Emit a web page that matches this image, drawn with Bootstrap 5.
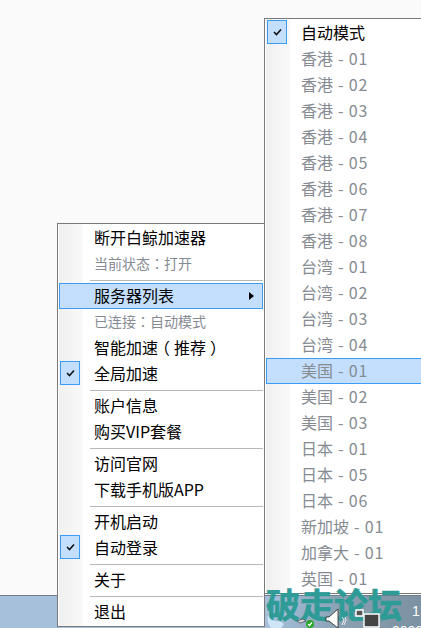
<!DOCTYPE html>
<html lang="en">
<head>
    <meta charset="UTF-8">
    <meta name="viewport" content="width=device-width, initial-scale=1.0">
    <title>白鲸加速器</title>
    <link href="https://cdn.jsdelivr.net/npm/bootstrap@5.3.0/dist/css/bootstrap.min.css" rel="stylesheet">
    <style>
        html, body { height: 100%; overflow: hidden; }
        body { font-family: "Noto Sans CJK SC", "Liberation Sans", sans-serif; background: #fafafa; color: #000; }
        .desk { position: relative; height: 628px; width: 421px; overflow: hidden; }
        .desk-top { height: 595px; }
        .taskbar { height: 33px; border-top: 1px solid #6f7f8f; background: linear-gradient(to right, #a6c0dc 0, #a6c0dc 270px, #8aa1b3 340px, #7c92a2 421px); position: relative; }
        .popup { position: absolute; background-color: #fff; border: 1px solid #7a7a7a; padding: 1px; background-image: linear-gradient(to right, #f0f0f0, #f9f9f9); background-size: 24px 100%; background-repeat: no-repeat; background-position: 1px 0; }
        .popup-main { left: 57px; top: 223px; width: 208px; }
        .popup-sub { left: 264px; top: 18px; width: 200px; }
        .row-item { height: 26px; font-size: 16px; line-height: 24px; padding-left: 35px; white-space: nowrap; position: relative; word-spacing: 1.5px; }
        .row-item.dim { color: #868b93; }
        .row-item.tiny { font-size: 14px; }
        .row-item.hot { background: #c3dffd; outline: 1px solid #3c9bf6; outline-offset: -1px; }
        .num { letter-spacing: 1px; }
        .punct { font-family: "Noto Sans CJK TC", sans-serif; }
        .paren-l { margin-left: -4px; margin-right: 4px; }
        .paren-r { margin-left: 4px; margin-right: -4px; }
        .row-sep { height: 6px; padding: 3px 0 0 31px; }
        .row-sep hr { margin: 0; border: 0; height: 1px; background: #b9b9b9; opacity: 1; }
        .tick { position: absolute; left: 1px; top: 0; width: 20px; height: 24px; background: #c3dffd; border: 1px solid #3c9bf6; }
        .tick svg { display: block; margin: 7px 0 0 5px; }
        .sub-arrow { position: absolute; right: 9px; top: 9px; width: 0; height: 0; border-left: 5px solid #000; border-top: 4px solid transparent; border-bottom: 4px solid transparent; }
        .stamp { position: absolute; left: 266px; top: 583px; font-size: 34px; line-height: 42px; font-weight: 700; color: #2f9b96; -webkit-text-stroke: .7px #2f9b96; white-space: nowrap; }
        .tray { position: absolute; left: 267px; top: 608px; }
        .clock { position: absolute; left: 392px; top: 5px; width: 40px; color: #fff; font-size: 14px; line-height: 20px; font-family: "Liberation Sans", sans-serif; }
        .clock div:first-child { padding-left: 20px; }
    </style>
</head>
<body>
    <div class="desk">
        <div class="desk-top"></div>
        <div class="taskbar">
            <div class="clock"><div>1</div><div>2022</div></div>
        </div>

        <!-- server list submenu -->
        <div class="popup popup-sub">
            <div class="row-item"><span class="tick"><svg width="9" height="8" viewBox="0 0 9 8"><path d="M1 4l2.5 2.5L8 1.5" fill="none" stroke="#111" stroke-width="1.6"/></svg></span>自动模式</div>
            <div class="row-item dim">香港 - <span class="num">01</span></div>
            <div class="row-item dim">香港 - <span class="num">02</span></div>
            <div class="row-item dim">香港 - <span class="num">03</span></div>
            <div class="row-item dim">香港 - <span class="num">04</span></div>
            <div class="row-item dim">香港 - <span class="num">05</span></div>
            <div class="row-item dim">香港 - <span class="num">06</span></div>
            <div class="row-item dim">香港 - <span class="num">07</span></div>
            <div class="row-item dim">香港 - <span class="num">08</span></div>
            <div class="row-item dim">台湾 - <span class="num">01</span></div>
            <div class="row-item dim">台湾 - <span class="num">02</span></div>
            <div class="row-item dim">台湾 - <span class="num">03</span></div>
            <div class="row-item dim">台湾 - <span class="num">04</span></div>
            <div class="row-item dim hot">美国 - <span class="num">01</span></div>
            <div class="row-item dim">美国 - <span class="num">02</span></div>
            <div class="row-item dim">美国 - <span class="num">03</span></div>
            <div class="row-item dim">日本 - <span class="num">01</span></div>
            <div class="row-item dim">日本 - <span class="num">05</span></div>
            <div class="row-item dim">日本 - <span class="num">06</span></div>
            <div class="row-item dim">新加坡 - <span class="num">01</span></div>
            <div class="row-item dim">加拿大 - <span class="num">01</span></div>
            <div class="row-item dim">英国 - <span class="num">01</span></div>
        </div>

        <!-- tray menu -->
        <div class="popup popup-main">
            <div class="row-item">断开白鲸加速器</div>
            <div class="row-item dim tiny">当前状态<span class="punct">：</span>打开</div>
            <div class="row-sep"><hr></div>
            <div class="row-item hot">服务器列表<span class="sub-arrow"></span></div>
            <div class="row-item dim tiny">已连接<span class="punct">：</span>自动模式</div>
            <div class="row-item">智能加速<span class="paren-l">（</span>推荐<span class="paren-r">）</span></div>
            <div class="row-item"><span class="tick"><svg width="9" height="8" viewBox="0 0 9 8"><path d="M1 4l2.5 2.5L8 1.5" fill="none" stroke="#111" stroke-width="1.6"/></svg></span>全局加速</div>
            <div class="row-sep"><hr></div>
            <div class="row-item">账户信息</div>
            <div class="row-item">购买VIP套餐</div>
            <div class="row-sep"><hr></div>
            <div class="row-item">访问官网</div>
            <div class="row-item">下载手机版APP</div>
            <div class="row-sep"><hr></div>
            <div class="row-item">开机启动</div>
            <div class="row-item"><span class="tick"><svg width="9" height="8" viewBox="0 0 9 8"><path d="M1 4l2.5 2.5L8 1.5" fill="none" stroke="#111" stroke-width="1.6"/></svg></span>自动登录</div>
            <div class="row-sep"><hr></div>
            <div class="row-item">关于</div>
            <div class="row-sep"><hr></div>
            <div class="row-item">退出</div>
        </div>

        <div class="stamp">破走论坛</div>
        <!-- tray icons sit over the stamp -->
        <svg class="tray" width="114" height="20" viewBox="0 0 114 20">
            <path d="M1 7c2 5 6 7 12 6l4 3-3 4H4C1 16 0 12 1 7z" fill="#cfe6f7"/>
            <path d="M30 13l6-2 3 2-6 2z" fill="#d8d8d8" stroke="#333" stroke-width=".6"/>
            <circle cx="43" cy="16" r="4" fill="#2aa52a"/>
            <path d="M41 16l1.500 1.500 2.500-3" fill="none" stroke="#fff" stroke-width="1.2"/>
            <path d="M59 9h3l9-8v19l-9-7h-3z" fill="#fff" stroke="#222" stroke-width=".8"/>
            <path d="M75 9l2 3-2 5M78 9l1 3-2 5" fill="none" stroke="#eee" stroke-width="1"/>
            <path d="M97 6h15v13H97z" fill="#444" stroke="#fff" stroke-width="1.4"/>
            <path d="M89 2h7v6h-7z" fill="#555" stroke="#fff" stroke-width="1.4"/>
        </svg>
    </div>
    <script src="https://cdn.jsdelivr.net/npm/bootstrap@5.3.0/dist/js/bootstrap.bundle.min.js"></script>
</body>
</html>
